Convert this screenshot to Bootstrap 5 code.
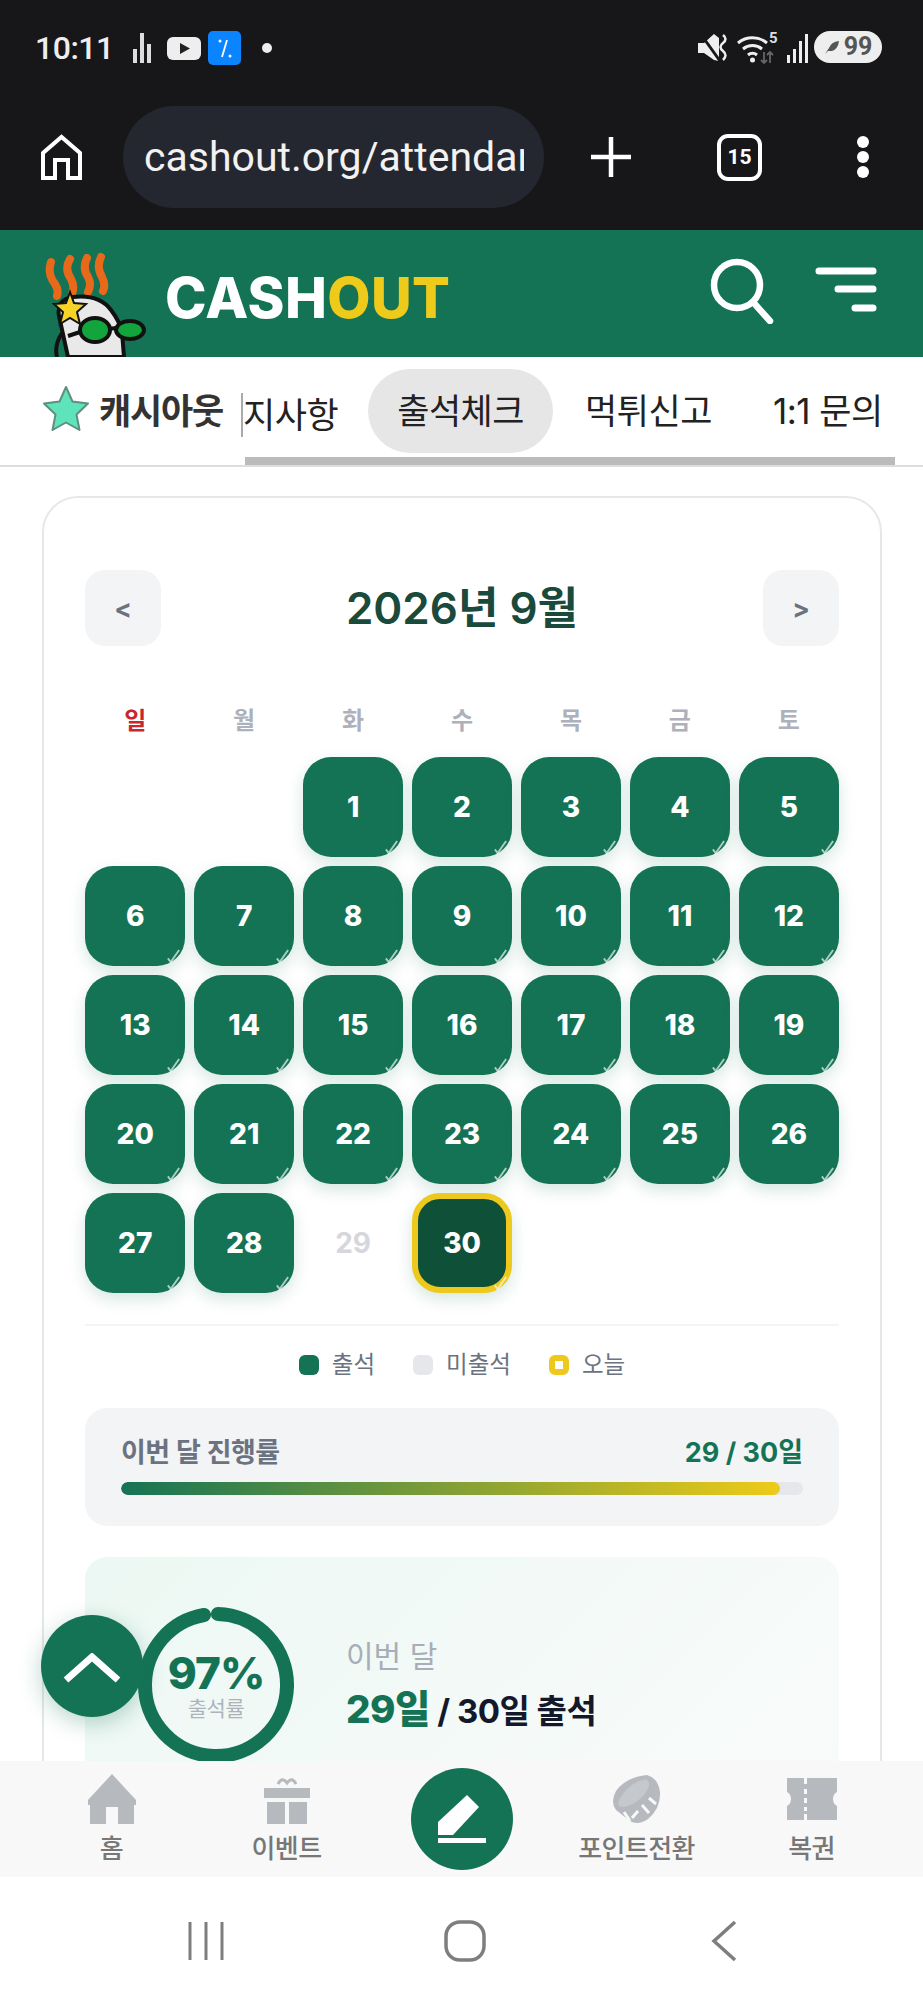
<!DOCTYPE html>
<html lang="ko">
<head>
<meta charset="UTF-8">
<meta name="viewport" content="width=device-width, initial-scale=1.0">
<title>캐시아웃 - 출석체크</title>
<link rel="stylesheet" href="https://cdn.jsdelivr.net/npm/bootstrap@5.3.0/dist/css/bootstrap.min.css">
<style>
body { width: 923px; height: 2000px; overflow: hidden; background: #fff; font-family: Inter, "Noto Sans CJK KR", sans-serif; }
.page-wrap { height: 2000px; position: relative; }
.chrome-top { height: 230px; background: #17171a; flex: none; }
.status-row { height: 95px; padding: 30px 41px 0 35px; color: #eee; font-family: Roboto, sans-serif; }
.clock { font-size: 32px; font-weight: 500; line-height: 36px; letter-spacing: -.5px; width: 98px; }
.browser-row { height: 135px; padding: 11px 36px 22px 41px; }
.url-pill { width: 421px; height: 102px; margin-left: 41px; margin-right: 47px; padding: 0 20px 0 21px; background: #252730; border-radius: 51px; color: #f2f2f2; font: 400 41px/102px Roboto, sans-serif; flex: none; }
.url-clip { display: block; overflow: hidden; white-space: nowrap; }
.tab-count { width: 45px; height: 47px; border: 4px solid #fff; border-radius: 11px; color: #fff; font: 700 21px/39px Roboto, sans-serif; text-align: center; margin-left: 86px; margin-right: 94px; flex: none; }
.site-head { height: 127px; background: #157355; flex: none; overflow: hidden; padding-left: 43px; }
.logo-word { font: 800 56px/1 Inter, sans-serif; color: #fff; letter-spacing: .4px; margin-left: 19px; margin-top: 8px; width: 545px; }
.logo-word span { color: #eecb1b; }
.tab-strip { height: 110px; flex: none; position: relative; border-bottom: 2px solid #ddd; padding-left: 42px; overflow: hidden; }
.tab-strip-name { font-size: 35px; font-weight: 700; color: #333; margin-left: 9px; width: 142px; white-space: nowrap; letter-spacing: -1.200px; }
.tab-scroll { border-left: 2px solid #aaa; height: 44px; margin-top: 36px; align-self: flex-start; }
.tab-link { font-size: 35px; color: #222; white-space: nowrap; line-height: 44px; letter-spacing: -.5px; }
.tab-on { width: 185px; height: 84px; line-height: 84px; background: #e6e6e6; border-radius: 42px; text-align: center; margin: 12px 32px 0 30px; }
.scroll-thumb { position: absolute; left: 245px; top: 100px; width: 650px; height: 10px; background: #bbb; }
.scroll-track { position: absolute; left: 86px; top: 108px; width: 159px; height: 2px; background: #a8a8a8; }
.main-area { flex: 1 1 auto; overflow: hidden; padding: 29px 41px 0 42px; min-height: 0; }
.att-panel { border: 2px solid #e5e7eb; border-radius: 36px; padding: 72px 41px 40px; }
.month-btn { width: 76px; height: 76px; background: #f3f4f6; border: 0; border-radius: 20px; color: #6b7280; font-size: 26px; font-weight: 700; padding: 0; }
.month-title { font-size: 44px; font-weight: 600; color: #1a4a3c; margin: 0; }
.day-grid { display: grid; grid-template-columns: repeat(7, 1fr); gap: 8.500px; }
.week-row { margin-top: 60px; margin-bottom: 21px; height: 30px; }
.week-label { text-align: center; font-size: 24px; line-height: 30px; font-weight: 700; color: #adb1bb; }
.week-label.sun { color: #c9252d; }
.day-cell { position: relative; aspect-ratio: 1; border-radius: 28px; display: flex; align-items: center; justify-content: center; font-size: 28px; font-weight: 800; color: #fff; }
.day-cell.done { background: #157355; box-shadow: 0 6px 16px rgba(21,115,85,.18); }
.day-cell.today { background: #0f5038; border: 6px solid #eec91d; box-shadow: 0 6px 16px rgba(21,115,85,.18); }
.day-cell.miss { color: #d5d7dd; font-weight: 700; }
.check-mark { position: absolute; right: 4px; bottom: 2px; width: 15px; height: 15px; }
.today .check-mark { right: -2px; bottom: -4px; }
.legend-row { margin-top: 31px; border-top: 2px solid #f3f4f6; padding-top: 25px; height: 54px; gap: 38px; font-size: 23.500px; line-height: 28px; color: #6b7280; }
.legend-dot { width: 20px; height: 20px; border-radius: 6px; margin-right: 13px; display: inline-block; }
.progress-box { margin-top: 30px; height: 118px; background: #f3f4f6; border-radius: 22px; padding: 27px 36px 0; }
.progress-label { font-size: 27px; font-weight: 600; color: #6b7280; line-height: 36px; letter-spacing: -.5px; }
.progress-num { font-size: 27px; font-weight: 700; color: #157355; line-height: 36px; }
.bar-track { height: 13px; background: #e5e7eb; border-radius: 7px; margin-top: 11px; overflow: hidden; }
.bar-fill { height: 100%; background: linear-gradient(90deg, #157355, #eecb18); border-radius: 7px; }
.stat-box { margin-top: 31px; height: 300px; padding: 50px 53px; border-radius: 22px; background: linear-gradient(135deg, #ecf8f3, #fafbfb); gap: 52px; }
.ring-wrap { position: relative; width: 156px; height: 156px; flex: none; }
.ring-text { position: absolute; inset: 0; }
.ring-pct { font-size: 44px; font-weight: 800; color: #157355; line-height: 46px; letter-spacing: -1px; margin-top: 43px; }
.ring-cap { font-size: 21px; color: #aeb3bb; line-height: 26px; letter-spacing: -.5px; }
.stat-copy { height: 156px; }
.stat-sub { font-size: 30px; color: #a8adb8; line-height: 38px; margin-bottom: 12px; }
.stat-main { font-size: 33px; font-weight: 700; color: #14182b; line-height: 44px; letter-spacing: -.5px; }
.stat-main b { font-size: 38.500px; font-weight: 800; color: #157355; }
.bottom-nav { height: 116px; flex: none; background: #f8f8f8; position: relative; }
.nav-cell { width: 175px; font-size: 26px; line-height: 30px; color: #777; font-weight: 500; letter-spacing: -.6px; padding-top: 13px; white-space: nowrap; }
.nav-cell svg { display: block; margin: 0 auto 10px; }
.write-btn { width: 102px; height: 102px; border-radius: 50%; background: #157355; margin-top: 7px; }
.write-btn svg { margin: 0; }
.sys-nav { height: 123px; flex: none; background: #fff; padding-top: 5px; }
.top-btn { position: absolute; left: 41px; top: 1615px; width: 102px; height: 102px; border-radius: 50%; background: #157355; border: 0; box-shadow: 0 6px 22px rgba(21,115,85,.3); padding: 0; }
</style>
</head>
<body>
<div class="page-wrap d-flex flex-column">

  <div class="chrome-top">
    <div class="status-row d-flex align-items-start">
      <span class="clock">10:11</span>
      <svg width="150" height="36" viewBox="0 0 150 36" class="flex-none">
        <g fill="#ddd"><rect x="0" y="19" width="4" height="14"/><rect x="7" y="3" width="4" height="30"/><rect x="14" y="14" width="4" height="19"/></g>
        <rect x="34" y="7" width="34" height="23" rx="6" fill="#eee"/><path d="M47 13l10 5.500-10 5.500z" fill="#222"/>
        <rect x="75" y="1" width="33" height="34" rx="5" fill="#0a84ff"/>
        <path d="M94 10l-5 17" stroke="#fff" stroke-width="1.800"/><circle cx="87" cy="11" r="1.500" fill="#fff"/><circle cx="97" cy="26" r="1.500" fill="#fff"/>
        <circle cx="134" cy="18" r="5" fill="#eee"/>
      </svg>
      <div class="ms-auto d-flex align-items-start">
        <svg width="124" height="36" viewBox="0 0 124 36">
          <path d="M0 13h6l10-9 5 4v23l-5-1-10-7H0z" fill="#eee"/><path d="M2 3l20 28" stroke="#17171a" stroke-width="3"/>
          <path d="M25 5q5 4 0 8t0 8q5 4 0 9" fill="none" stroke="#eee" stroke-width="2.500"/>
          <g fill="none" stroke="#eee" stroke-width="3"><path d="M40 13a23 23 0 0 1 29 0"/><path d="M45 19a15 15 0 0 1 19 0"/><path d="M50 25a7 7 0 0 1 9 0"/></g>
          <circle cx="54.500" cy="30" r="2.500" fill="#eee"/>
          <text x="71" y="13" font-family="Roboto" font-size="15" font-weight="700" fill="#ddd">5</text>
          <path d="M66 22v11M72 33V22M63 30l3 3 3-3M69 25l3-3 3 3" stroke="#666" stroke-width="1.800" fill="none"/>
          <g fill="#eee"><rect x="89" y="25" width="3" height="8"/><rect x="95" y="19" width="3" height="14"/><rect x="101" y="11" width="3" height="22"/><rect x="107" y="4" width="3" height="29"/></g>
        </svg>
        <div class="d-flex align-items-center justify-content-center" style="width:68px;height:32px;margin-left:-8px;margin-top:1px;border-radius:16px;background:#eee;color:#555;font:700 25px/32px Roboto,sans-serif;">
          <svg width="16" height="16" viewBox="0 0 16 16" class="me-1"><path d="M1 15L5 9q2-6 10-7-1 8-7 10H4z" fill="#555"/></svg>99
        </div>
      </div>
    </div>
    <div class="browser-row d-flex align-items-center">
      <svg width="41" height="46" viewBox="0 0 41 46" class="flex-none"><path d="M2 44V19L20.500 3 39 19v25H27V26H14v18z" fill="none" stroke="#fff" stroke-width="4"/></svg>
      <div class="url-pill"><span class="url-clip">cashout.org/attendance</span></div>
      <svg width="40" height="40" viewBox="0 0 40 40" class="flex-none"><path d="M20 0v40M0 20h40" stroke="#fff" stroke-width="4.500"/></svg>
      <div class="tab-count">15</div>
      <svg width="14" height="44" viewBox="0 0 14 44" class="flex-none"><circle cx="7" cy="7" r="6" fill="#fff"/><circle cx="7" cy="22" r="6" fill="#fff"/><circle cx="7" cy="37" r="6" fill="#fff"/></svg>
    </div>
  </div>

  <header class="site-head d-flex align-items-center">
    <svg width="103" height="127" viewBox="0 0 103 127" class="flex-none align-self-end">
      <g fill="none" stroke="#e9691b" stroke-width="8" stroke-linecap="round">
        <path d="M8 32q-4 12 4 22 4 6 2 12"/>
        <path d="M27 29q-6 10 1 20 4 7 1 15"/>
        <path d="M44 28q-5 10 1 19 4 7 0 15"/>
        <path d="M58 27q-5 10 1 20 4 8 1 14"/>
      </g>
      <path d="M25 127L16 86q-3-16 14-19 26-3 38 13 9 12 11 22l2 25z" fill="#e9e9e9" stroke="#111" stroke-width="4"/>
      <path d="M14 127q-3-12 5-24" fill="none" stroke="#111" stroke-width="4"/>
      <path d="M27 62l4 11 12 1-9 8 3 12-10-6-10 6 3-12-9-8 12-1z" fill="#f5d327" stroke="#111" stroke-width="2"/>
      <path d="M25 106l12-4M65 99l8-1" stroke="#111" stroke-width="4"/>
      <ellipse cx="52" cy="100" rx="15" ry="12" fill="#12a53c" stroke="#111" stroke-width="4"/>
      <ellipse cx="87" cy="100" rx="14" ry="9" fill="#12a53c" stroke="#111" stroke-width="4"/>
    </svg>
    <div class="logo-word flex-none">CASH<span>OUT</span></div>
    <svg width="64" height="66" viewBox="0 0 64 66" class="flex-none" style="margin-top:-6px"><circle cx="27" cy="27" r="23" fill="none" stroke="#fff" stroke-width="6.500"/><path d="M43 44l17 19" stroke="#fff" stroke-width="6.500" stroke-linecap="round"/></svg>
    <svg width="62" height="48" viewBox="0 0 62 48" class="flex-none" style="margin-left:41px;margin-top:-6px"><g stroke="#fff" stroke-width="7" stroke-linecap="round"><path d="M4 4h54M23 22h35M40 41h18"/></g></svg>
  </header>

  <nav class="tab-strip d-flex align-items-center">
    <svg width="48" height="48" viewBox="0 0 48 48" class="flex-none" style="margin-top:-7px"><path d="M24 3l6.500 14.500 15.500 2-11.500 11 3 15.500L24 38.500 10.500 46l3-15.500L2 19.500l15.500-2z" fill="#5fe3bb" stroke="#5f8f7f" stroke-width="2" stroke-linejoin="round"/></svg>
    <span class="tab-strip-name">캐시아웃</span>
    <div class="tab-scroll d-flex align-items-start flex-none">
      <span class="tab-link">지사항</span>
    </div>
    <span class="tab-link tab-on align-self-start">출석체크</span>
    <span class="tab-link align-self-start" style="margin-top:32px">먹튀신고</span>
    <span class="tab-link align-self-start" style="margin:32px 0 0 61px">1:1 문의</span>
    <div class="scroll-track"></div>
    <div class="scroll-thumb"></div>
  </nav>

  <main class="main-area">
    <section class="att-panel">
      <div class="d-flex align-items-center justify-content-between">
        <button class="month-btn" type="button">&lt;</button>
        <h2 class="month-title">2026년 9월</h2>
        <button class="month-btn" type="button">&gt;</button>
      </div>
      <div class="day-grid week-row" id="weekRow"></div>
      <div class="day-grid" id="dayGrid"></div>
      <div class="legend-row d-flex justify-content-center align-items-center">
        <span class="d-flex align-items-center"><i class="legend-dot" style="background:#157355"></i>출석</span>
        <span class="d-flex align-items-center"><i class="legend-dot" style="background:#e5e7eb"></i>미출석</span>
        <span class="d-flex align-items-center"><i class="legend-dot" style="background:#fff;border:6px solid #eec91d"></i>오늘</span>
      </div>
      <div class="progress-box">
        <div class="d-flex justify-content-between">
          <span class="progress-label">이번 달 진행률</span>
          <span class="progress-num">29 / 30일</span>
        </div>
        <div class="bar-track"><div class="bar-fill" style="width:96.7%"></div></div>
      </div>
      <div class="stat-box d-flex align-items-start">
        <div class="ring-wrap">
          <svg width="156" height="156" viewBox="0 0 156 156">
            <circle cx="78" cy="78" r="71" fill="none" stroke="#157355" stroke-width="14" stroke-linecap="round" stroke-dasharray="431.500 14.600" transform="rotate(-88.500 78 78)"/>
          </svg>
          <div class="ring-text text-center">
            <div class="ring-pct">97%</div>
            <div class="ring-cap">출석률</div>
          </div>
        </div>
        <div class="stat-copy d-flex flex-column justify-content-center">
          <div class="stat-sub">이번 달</div>
          <div class="stat-main"><b>29일</b> / 30일 출석</div>
        </div>
      </div>
    </section>
  </main>

  <nav class="bottom-nav d-flex justify-content-center text-center">
    <div class="nav-cell">
      <svg width="52" height="50" viewBox="0 0 52 50"><path d="M26 0l24 26v5h-2v19H32V33H20v17H4V31H2v-5z" fill="#b6babe"/></svg>
      홈
    </div>
    <div class="nav-cell">
      <svg width="46" height="50" viewBox="0 0 46 50"><path d="M14 10q4-8 9-1 5-7 9 1" fill="none" stroke="#b6babe" stroke-width="3"/><path d="M0 14h46v10H0zM3 28h18v22H3zM25 28h18v22H25z" fill="#b6babe"/></svg>
      이벤트
    </div>
    <div class="nav-cell d-flex justify-content-center" style="padding-top:0">
      <div class="write-btn d-flex align-items-center justify-content-center">
        <svg width="48" height="48" viewBox="0 0 48 48"><path d="M29 0l12 12-26 28H0V27z" fill="#fff"/><rect x="0" y="43" width="48" height="5" fill="#fff"/></svg>
      </div>
    </div>
    <div class="nav-cell">
      <svg width="50" height="50" viewBox="0 0 50 50"><path d="M35 1q11 3 13 17 1 16-12 27-10 7-18 2L4 36Q-2 28 4 17 14 3 35 1z" fill="#b6babe"/><path d="M34 5Q16 9 7 26q-2 6 3 7 12-1 22-12 9-12 2-16z" fill="#c5c8cc"/><path d="M20 44l6-7M12 38l6 9M30 31l7 8M37 24l7 6" stroke="#f8f8f8" stroke-width="3"/></svg>
      포인트전환
    </div>
    <div class="nav-cell">
      <svg width="50" height="50" viewBox="0 0 50 50"><path d="M0 4h17v6h3V4h30v14q-4 2-4 7t4 7v14H20v-6h-3v6H0V32q4-2 4-7t-4-7z" fill="#b6babe"/><path d="M18.500 15v5M18.500 24v5M18.500 33v4" stroke="#f8f8f8" stroke-width="3"/></svg>
      복권
    </div>
  </nav>

  <div class="sys-nav d-flex justify-content-center align-items-center">
    <svg width="40" height="40" viewBox="0 0 40 40" class="flex-none" style="margin-right:217px"><path d="M3 1v38M19 1v38M35 1v38" stroke="#7e7e7e" stroke-width="3"/></svg>
    <svg width="42" height="42" viewBox="0 0 42 42" class="flex-none" style="margin-right:225px"><rect x="2" y="2" width="38" height="38" rx="14" fill="none" stroke="#7e7e7e" stroke-width="3.500"/></svg>
    <svg width="26" height="42" viewBox="0 0 26 42" class="flex-none"><path d="M24 2L3 21l21 19" fill="none" stroke="#7e7e7e" stroke-width="3.500"/></svg>
  </div>

  <button class="top-btn d-flex align-items-center justify-content-center" type="button">
    <svg width="58" height="30" viewBox="0 0 58 30" style="margin-top:4px"><path d="M3 27L29 4l26 23" fill="none" stroke="#fff" stroke-width="7"/></svg>
  </button>
</div>

<script>
  const weekNames = ["일", "월", "화", "수", "목", "금", "토"];
  document.getElementById("weekRow").innerHTML = weekNames.map(function (n, i) {
    return `<div class="week-label${i === 0 ? " sun" : ""}">${n}</div>`;
  }).join("");

  const checkSvg = `<svg class="check-mark" viewBox="0 0 16 16"><path d="M2 10l3 4 9-13" fill="none" stroke="#fff" stroke-opacity=".65" stroke-width="2"/></svg>`;
  let cells = "<div></div><div></div>";
  for (let d = 1; d <= 30; d++) {
    if (d === 29) cells += `<div class="day-cell miss">${d}</div>`;
    else if (d === 30) cells += `<div class="day-cell today">${d}${checkSvg}</div>`;
    else cells += `<div class="day-cell done">${d}${checkSvg}</div>`;
  }
  document.getElementById("dayGrid").innerHTML = cells;
</script>
<script src="https://cdn.jsdelivr.net/npm/bootstrap@5.3.0/dist/js/bootstrap.bundle.min.js"></script>
</body>
</html>
